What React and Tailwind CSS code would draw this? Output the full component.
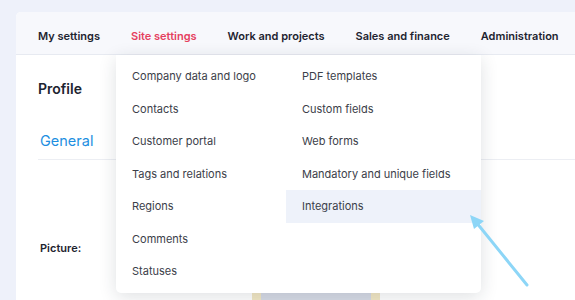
import React from 'react';

const navItems = ['My settings', 'Site settings', 'Work and projects', 'Sales and finance', 'Administration'];

const leftMenu = ['Company data and logo', 'Contacts', 'Customer portal', 'Tags and relations', 'Regions', 'Comments', 'Statuses'];
const rightMenu = ['PDF templates', 'Custom fields', 'Web forms', 'Mandatory and unique fields', 'Integrations'];

const MenuItem = ({ label, active }) => (
  <div
    className={`h-[32.5px] flex items-center pl-4 text-[11px] text-[#3b4049] ${active ? 'bg-[#eef2fa]' : ''}`}
  >
    {label}
  </div>
);

const App = () => {
  return (
    <div className="relative w-[575px] h-[300px] overflow-hidden bg-[#eef1fa] pt-3 pl-4 font-['Inter',sans-serif]">
      <div className="h-full bg-white rounded-tl-[5px] flex flex-col">
        {/* Top nav */}
        <nav className="h-[43px] flex-shrink-0 bg-[#f7f8fc] border-b border-[#e7eaf1] rounded-tl-[5px] flex items-center gap-[31px] pl-[22px] pt-[6px] whitespace-nowrap">
          {navItems.map((item) => (
            <span
              key={item}
              className={`text-[11px] font-semibold ${item === 'Site settings' ? 'text-[#e5405e]' : 'text-[#1e2430]'}`}
            >
              {item}
            </span>
          ))}
        </nav>

        {/* Page content */}
        <div className="flex-1 pl-[22px]">
          <h1 className="mt-[23px] text-[14px] font-semibold text-[#1e2430] leading-[22px]">Profile</h1>
          <div className="mt-[28px] border-b border-[#eceef3] pl-[2px] pb-[7px]">
            <span className="text-[14.5px] text-[#1e8fe1] leading-[22px]">General</span>
          </div>
          <div className="mt-[80px] pl-[2px] text-[11px] font-semibold text-[#1e2430]">Picture:</div>
          <div className="ml-[214px] mt-[30px] w-[128px] h-[20px] bg-[#d6dae5] border-x-[9px] border-[#f2e7c4]" />
        </div>
      </div>

      {/* Dropdown */}
      <div className="absolute left-[116px] top-[55px] w-[365px] h-[238px] bg-white rounded-b-[5px] shadow-[0_4px_18px_rgba(30,40,60,0.14)] grid grid-cols-[170px_195px] pt-[5px]">
        <div>
          {leftMenu.map((m) => (
            <MenuItem key={m} label={m} />
          ))}
        </div>
        <div>
          {rightMenu.map((m) => (
            <MenuItem key={m} label={m} active={m === 'Integrations'} />
          ))}
        </div>
      </div>

      {/* Pointer arrow */}
      <svg className="absolute left-0 top-0" width="575" height="300" viewBox="0 0 575 300">
        <line x1="527" y1="285" x2="476" y2="222" stroke="#8dd6f7" strokeWidth="3" strokeLinecap="round" />
        <polygon points="470,215 484,221 474,229" fill="#8dd6f7" />
      </svg>
    </div>
  );
};

export default App;
